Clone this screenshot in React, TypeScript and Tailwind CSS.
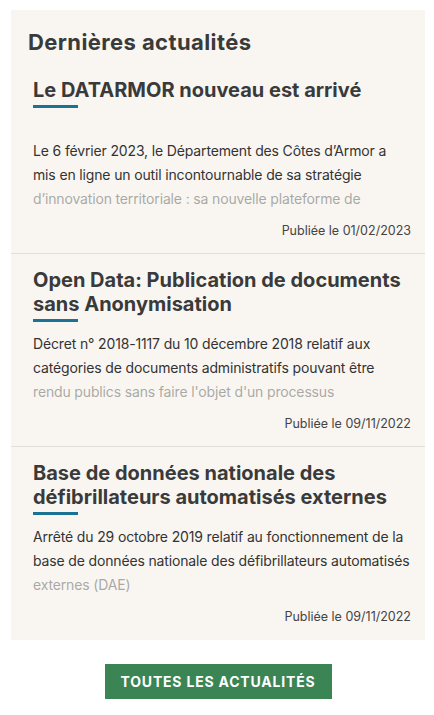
const articles = [
  {
    title: 'Le DATARMOR nouveau est arrivé',
    excerpt:
      "Le 6 février 2023, le Département des Côtes d’Armor a mis en ligne un outil incontournable de sa stratégie d’innovation territoriale : sa nouvelle plateforme de",
    date: '01/02/2023',
  },
  {
    title: 'Open Data: Publication de documents sans Anonymisation',
    excerpt:
      "Décret n° 2018-1117 du 10 décembre 2018 relatif aux catégories de documents administratifs pouvant être rendu publics sans faire l'objet d'un processus",
    date: '09/11/2022',
  },
  {
    title: 'Base de données nationale des défibrillateurs automatisés externes',
    excerpt:
      'Arrêté du 29 octobre 2019 relatif au fonctionnement de la base de données nationale des défibrillateurs automatisés externes (DAE)',
    date: '09/11/2022',
  },
];

function ArticleCard({ title, excerpt, date, first }: { title: string; excerpt: string; date: string; first?: boolean }) {
  return (
    <article className={`pl-[22px] pr-[14px] pb-[12px] ${first ? 'pt-[4px]' : 'pt-[14px] border-t border-[#e2dfda]'}`}>
      <h3 className="text-[20px] leading-[24px] font-bold text-[#3a3a3a]">{title}</h3>
      <div className="mt-[3px] h-[3px] w-[45px] bg-[#1a7394]" />
      {/* excerpt fades out on its last line */}
      <div className={`relative h-[72px] overflow-hidden text-[14px] leading-[24px] tracking-[-0.15px] text-[#333] ${first ? 'mt-[31px]' : 'mt-[10px]'}`}>
        <p>{excerpt}</p>
        <div className="absolute left-0 right-0 bottom-0 h-[24px] bg-[#f9f6f2]/60" />
      </div>
      <p className="mt-[10px] text-right text-[12.5px] leading-[20px] text-[#444]">{`Publiée le ${date}`}</p>
    </article>
  );
}

export default function App() {
  return (
    <div className="min-h-[715px] bg-white pt-[10px] pl-[11px] pr-[9px] font-['Inter',sans-serif]">
      <section className="bg-[#f9f6f2] pb-[1px]">
        <h2 className="pl-[17px] pt-[17px] pb-[17px] text-[22px] leading-[30px] font-bold tracking-[0.4px] text-[#3a3a3a]">
          Dernières actualités
        </h2>
        {articles.map((a, i) => (
          <ArticleCard key={a.title} {...a} first={i === 0} />
        ))}
      </section>
      <div className="flex justify-center pt-[24px]">
        <button className="h-[35px] w-[227px] bg-[#3b8454] text-white text-[14px] font-bold tracking-[0.8px] uppercase">
          Toutes les actualités
        </button>
      </div>
    </div>
  );
}
